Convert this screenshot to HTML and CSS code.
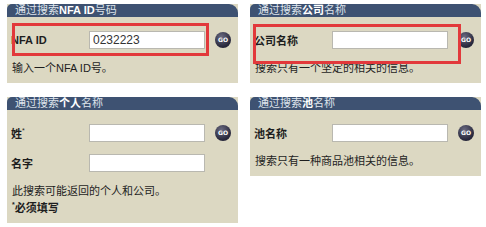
FILE: index.html
```html
<!DOCTYPE html>
<html lang="zh-CN">
<head>
  <meta charset="UTF-8">
  <title>NFA 搜索</title>
  <link rel="stylesheet" href="styles.css">
</head>
<body>

  <div class="search-grid">

    <div class="panel">
      <div class="panel-head">通过搜索<b>NFA ID</b>号码</div>
      <div class="panel-body">
        <div class="field">
          <label class="field-label">NFA ID</label>
          <input class="field-input" type="text" value="0232223">
          <span class="go-btn">GO</span>
        </div>
        <p class="hint">输入一个NFA ID号。</p>
      </div>
      <div class="mark mark-nfa"></div>
    </div>

    <div class="panel">
      <div class="panel-head">通过搜索<b>公司</b>名称</div>
      <div class="panel-body">
        <div class="field">
          <label class="field-label">公司名称</label>
          <input class="field-input" type="text">
          <span class="go-btn">GO</span>
        </div>
        <p class="hint">搜索只有一个坚定的相关的信息。</p>
      </div>
      <div class="mark mark-firm"></div>
    </div>

    <div class="panel">
      <div class="panel-head">通过搜索<b>个人</b>名称</div>
      <div class="panel-body">
        <div class="field">
          <label class="field-label">姓<sup>*</sup></label>
          <input class="field-input" type="text">
          <span class="go-btn">GO</span>
        </div>
        <div class="field">
          <label class="field-label">名字</label>
          <input class="field-input" type="text">
        </div>
        <p class="hint">此搜索可能返回的个人和公司。<br><b><sup>*</sup>必须填写</b></p>
      </div>
    </div>

    <div class="panel">
      <div class="panel-head">通过搜索<b>池</b>名称</div>
      <div class="panel-body">
        <div class="field">
          <label class="field-label">池名称</label>
          <input class="field-input" type="text">
          <span class="go-btn">GO</span>
        </div>
        <p class="hint">搜索只有一种商品池相关的信息。</p>
      </div>
    </div>

  </div>

</body>
</html>
```

FILE: styles.css
```css
body {
  margin: 0;
  padding: 0;
  background: #fff;
  font-family: "Liberation Sans", "Noto Sans CJK SC", sans-serif;
  font-size: 11px;
  color: #1e1e1e;
}

.search-grid {
  display: grid;
  grid-template-columns: 231px 231px;
  column-gap: 12px;
  row-gap: 14px;
  align-items: start;
  padding: 4px 0 0 7px;
}

.panel {
  position: relative;
  background: #dcd8c2;
}

.panel-head {
  height: 13px;
  line-height: 13px;
  padding-left: 8px;
  background: #3e5272;
  color: #dfe4ec;
  font-size: 11px;
  border-radius: 5px 9px 0 0;
  white-space: nowrap;
}

.panel-head b {
  color: #fff;
}

.panel-body {
  padding: 14px 3px 8px 3px;
}

.field {
  display: flex;
  align-items: center;
  height: 18px;
  margin-bottom: 12px;
}

.field:last-of-type {
  margin-bottom: 0;
}

.field-label {
  width: 79px;
  flex-shrink: 0;
  padding-left: 1px;
  font-weight: bold;
  font-size: 11px;
}

.field-label sup,
.hint sup {
  font-size: 7px;
  font-weight: normal;
}

.field-input {
  box-sizing: border-box;
  width: 116px;
  height: 18px;
  margin: 0 0 0 -1px;
  padding: 0 3px;
  border: 1px solid #b9b8b0;
  background: #fff;
  font-family: "Liberation Sans", sans-serif;
  font-size: 12px;
  color: #333;
}

.go-btn {
  width: 16px;
  height: 16px;
  margin-left: 10px;
  border-radius: 50%;
  background: radial-gradient(circle at 40% 30%, #6a6a80, #26263a 70%);
  color: #fff;
  font-family: "DejaVu Sans", sans-serif;
  font-size: 6px;
  font-weight: bold;
  line-height: 16px;
  text-align: center;
}

.hint {
  margin: 13px 0 0 2px;
  line-height: 13px;
}

.hint b sup {
  font-weight: bold;
}

/* red highlight boxes drawn over the form */
.mark {
  position: absolute;
  border: 3px solid #e2393b;
  box-sizing: border-box;
}

.mark-nfa {
  left: 5px;
  top: 19px;
  width: 197px;
  height: 33px;
}

.mark-firm {
  left: 3px;
  top: 20px;
  width: 208px;
  height: 40px;
}
```
